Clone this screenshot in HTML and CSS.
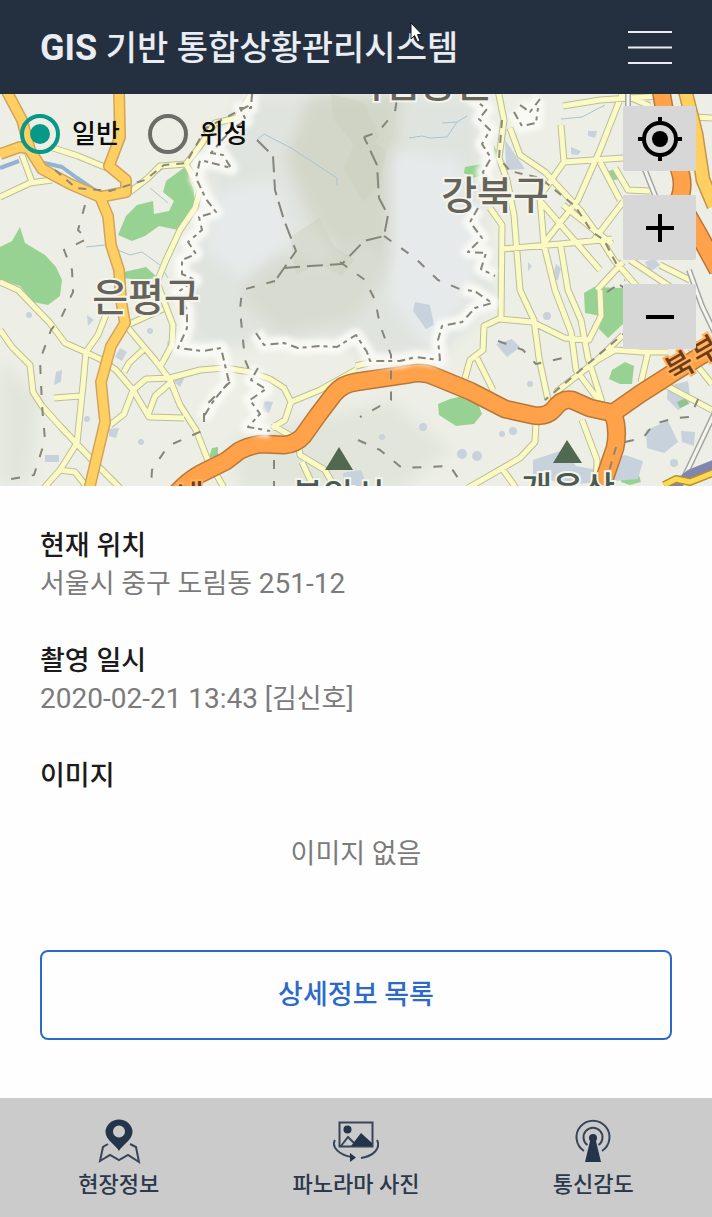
FILE: index.html
```html
<!DOCTYPE html>
<html lang="ko">
<head>
<meta charset="utf-8">
<meta name="viewport" content="width=device-width, initial-scale=1">
<title>GIS 기반 통합상황관리시스템</title>
<link rel="stylesheet" href="styles.css">
</head>
<body>
<header class="header">
  <h1 class="header-title"><span class="header-mark">GIS</span> 기반 통합상황관리시스템</h1>
  <button class="menu-button" type="button" aria-label="메뉴">
    <svg width="44" height="36" viewBox="0 0 44 36" stroke="#e9edf3" stroke-width="2"><path d="M0 2H44M0 17.500H44M0 33H44"/></svg>
  </button>
</header>

<section class="map" aria-label="지도">
  <svg class="map-canvas" viewBox="0 94 712 392" preserveAspectRatio="xMidYMid slice">
    <defs>
      <filter id="soft" x="-20%" y="-20%" width="140%" height="140%"><feGaussianBlur stdDeviation="7"/></filter>
      <filter id="glow" x="-20%" y="-20%" width="140%" height="140%"><feGaussianBlur stdDeviation="2"/></filter>
      <path id="minor" d="M253 90L237 118L215 123L200 146L186 164L160 166L148 178L130 192M186 164L200 190L195 208L180 230L166 260L157 282L165 304L173 325L172 345L160 367M50 147L78 156L107 168M0 197L30 183L52 180M22 155L32 182M0 282L18 290L50 323L65 343L85 352L100 359L116 370L133 390L149 417L184 418M0 330L12 347L30 365L33 392L42 406L60 426L76 443L95 463L120 488M107 312L98 335L86 352L83 385L77 443L60 470L44 488M128 328L155 360L170 380L180 405L196 430L207 458L224 488M125 326L163 309M143 350L129 363L124 372M133 390L146 379L170 378L200 370L225 368L250 372L270 379L284 388L291 402L285 420L272 428M133 390L124 414L110 425M170 383L155 396L148 415M291 402L320 390L356 370M54 398L80 396M60 470L75 472L86 486M272 425L298 440L300 455L325 470L335 488M302 462L314 488
      M356 366L372 362L430 362M498 90L504 120L499 158L507 180L514 215L520 290L534 320L539 358L548 400M510 128L520 155L545 172L580 210L596 232L614 260L640 290M563 106L600 100L660 96M622 94L600 150L578 200L545 242M561 125L564 162L623 158M564 162L540 196M540 198L544 245L555 290L571 332L576 370L600 402M502 249L560 244L612 239M490 208L502 225L501 318L484 326L483 350L470 360L465 378M541 202L600 270M563 205L612 244M623 202L594 240M500 319L532 322L565 338L589 340L601 316L600 290M560 242L568 290L581 320L588 358L602 402M623 335L595 362L556 392M594 362L615 350L642 352L668 352M648 352L641 382M477 358L493 390M536 422L535 442L520 458L468 488M501 467L516 488M582 420L597 460L596 486M623 262L597 290M600 162L620 200M615 168L628 190L650 191M622 94L650 106M630 260L690 300M652 115L712 118M665 385L712 410M686 352L712 384M660 265L690 280"/>
      <path id="major" d="M6 90L22 120L30 150L42 169L70 184L100 197L108 216L111 245L119 270L121 300L125 323L111 346L101 382L105 422L97 456L89 490M119 90L120 137L109 166L126 180L126 192L100 197M0 154L20 147L32 149"/>
      <path id="east" d="M685 90L696 134L703 180L714 206"/>
      <path id="orange" d="M174 496Q186 482 200 474L226 461L239 451Q250 445 262 444L284 445Q296 444 303 436L318 415L334 394Q342 384 356 382L410 374Q424 371 436 377L470 391L505 409L532 415Q546 418 554 409Q562 398 572 400L590 408L613 413L640 394L676 371L720 344M613 413Q619 430 615 448L600 492M661 90L667 125L681 175Q684 188 679 200L699 235L718 270"/>
      <path id="ridge" d="M252 94L251 108L240 108L246 120L234 128L222 140L211 153L223 155L231 168L200 160L196 178L206 199L216 212L199 217L202 230L188 242L196 254L182 260L182 274L195 280L178 292L187 310L187 328L178 348L203 351L221 348L225 365L229 382L214 400L203 418M256 333L264 345L284 343L298 348L320 346L337 347L356 335L367 352L370 361L400 361L416 357L440 360L438 340L442 326L462 322L475 308L492 303L476 292L463 289M470 97L487 109L479 119L490 130L482 144L491 158L483 172L487 183M478 208L470 222L482 238L468 252L486 253L481 269L495 276M258 368L251 380L266 389L250 400L260 414L248 427L270 431M520 105L530 112L540 99M514 112L522 126L536 123L538 108"/>
    </defs>
    <rect y="94" width="712" height="392" fill="#edefe6"/>
    <g filter="url(#soft)">
      <path fill="#e0e4df" d="M245 94L480 94L485 220L495 300L440 355L370 360L335 340L250 345L220 350L190 340L185 260L215 205L205 160z"/>
      <path fill="#d3d7c9" d="M310 94L400 94L395 180L400 250L370 285L315 225L285 160z"/>
      <path fill="#d8dbd0" d="M262 250L320 265L370 240L390 270L355 320L280 335L240 300z"/>
      <path fill="#e6eaea" d="M390 150L460 160L480 280L430 350L390 300zM220 190L275 180L295 240L245 280L205 250z"/>
      <path fill="#e1e5da" d="M230 440L390 400L450 450L400 490L240 490zM0 360L40 400L30 480L0 486z"/>
    </g>
    <g fill="#c9cdb8" opacity=".35"><path d="M331 94L363 102L380 136L361 156L344 132L333 119z"/><path d="M290 237L319 218L334 246L355 259L342 276L319 264L296 275z"/><path d="M359 130L386 151L380 185L363 202L344 169z"/></g>
    <g fill="#98d292">
      <path d="M166 181L185 167L194 190L194 216L178 230L159 226L145 236L132 241L118 235L126 216L137 205L153 201L154 214L169 211L174 201L163 192z"/>
      <path d="M20 227L25 243L45 255L56 267L62 280L60 296L48 305L33 302L20 286L0 280V247L12 241z"/>
      <path d="M124 272L146 267L158 278L140 280L123 278z"/><path d="M465 167L482 164L485 174L473 178L464 173z"/>
      <path d="M438 404L450 399L463 396L477 401L482 414L474 424L456 426L439 415z"/>
      <path d="M584 293L594 287L623 288V324L608 338L599 329L601 316L585 313z"/>
      <path d="M612 370L625 362L634 366L632 384L620 384L609 379z"/><path d="M622 474L638 472L641 482L630 485L621 482z"/><path d="M609 171L618 168L620 179L608 181zM212 448L218 447L218 456L209 458zM494 145L499 156L493 160z"/>
    </g>
    <g fill="#c7d2dc">
      <path d="M415 302L430 305L434 325L426 329L413 311z"/><path d="M533 460L563 450L576 466L592 469L625 455L643 461L638 479L565 485L533 474z"/><path d="M646 430L668 421L678 442L664 453L647 448zM668 386L688 381L691 402L678 410L667 399zM681 431L695 432L694 446L682 442z"/><path d="M496 344L512 339L520 347L507 357zM87 315L94 320L88 326zM178 376L185 377L180 387L174 382zM265 401L273 402L269 413L261 411zM45 455H59V462H45zM120 348L127 352L122 361L115 357zM56 372L62 370L61 382L54 385zM109 429L119 428L116 438L109 436zM343 473L361 470L367 486H343zM505 140L525 169L506 170zM571 147L581 151L578 155L571 154zM588 131L597 131L595 138L588 136zM528 262L532 266L528 271zM645 262L654 258L660 265L650 272zM556 264L561 268L558 280L552 279z"/>
      <circle cx="29" cy="315" r="3"/><circle cx="150" cy="331" r="3"/><circle cx="87" cy="419" r="3"/><circle cx="141" cy="442" r="3"/><circle cx="171" cy="344" r="4"/><circle cx="423" cy="427" r="4"/><circle cx="462" cy="454" r="5"/><circle cx="477" cy="456" r="5"/><circle cx="513" cy="431" r="4"/><circle cx="530" cy="384" r="3"/><circle cx="547" cy="316" r="4"/><circle cx="382" cy="437" r="3"/><circle cx="674" cy="463" r="4"/><circle cx="502" cy="434" r="3"/>
    </g>
    <path fill="#69b95f" opacity=".6" d="M677 402L686 398L689 404L680 408z"/>
    <g fill="none" stroke-linejoin="round">
      <path stroke="#91b4d2" stroke-width="4" d="M0 168L19 161M40 162L62 167L77 178L96 191M130 190L148 178L164 166"/>
      <path stroke="#a8c4d2" stroke-width="1" d="M257 140L264 134L291 148L314 163L337 178V186M409 138L422 136L430 138L447 137L457 122L442 123M457 122L467 116M561 119L582 117L605 105M86 247L105 245L130 255L142 252L160 265L168 278M150 188L168 203"/>
      <use href="#minor" stroke="#bfbc98" stroke-width="7"/><use href="#minor" stroke="#fafac5" stroke-width="5"/>
      <path stroke="#a5a5a1" stroke-width="6" d="M628 94V107M643 165L662 213M689 270L702 306L722 348M716 410L680 486"/><path stroke="#f5f5ef" stroke-width="3" d="M628 94V107M643 165L662 213M689 270L702 306L722 348M716 410L680 486"/>
      <use href="#major" stroke="#d1a45c" stroke-width="12"/><use href="#major" stroke="#ffcf62" stroke-width="9"/>
      <use href="#east" stroke="#c59643" stroke-width="15"/><use href="#east" stroke="#ffcf62" stroke-width="12"/>
      <use href="#orange" stroke="#b87738" stroke-width="19"/><use href="#orange" stroke="#ffa249" stroke-width="16"/>
      <path stroke="#7f86b0" stroke-width="9" d="M670 490L690 474L720 462"/><path stroke="#b58d35" stroke-width="8" d="M664 485L676 479L690 482L720 470"/><path stroke="#ffda51" stroke-width="5" d="M664 485L676 479L690 482L720 470"/>
      <use href="#ridge" stroke="#fbfbf7" stroke-width="14" opacity=".9" filter="url(#glow)"/>
      <use href="#ridge" stroke="#858579" stroke-width="2" stroke-dasharray="8 4 4 5"/>
      <g stroke="#85857a" stroke-width="2" stroke-dasharray="9 12">
        <path stroke-dasharray="16 7" d="M257 140L273 156L275 190L284 220L296 251L275 281M284 268L310 266L342 264L364 241L384 236L388 215L379 198L377 165L364 137"/>
        <path d="M275 281L242 290L240 310L245 360L250 372M364 137L378 132L395 112L397 98"/>
        <path d="M384 236L415 258L438 280L462 290M340 262L365 280L375 300L380 325L391 355L391 400L360 417M85 205L78 230L87 239L64 250L72 270L73 292L62 316L51 330L40 360L42 405L45 440L34 475L0 481"/>
        <path d="M230 382L204 407L204 430L168 446L152 470L151 486M274 460V486M358 440L380 450L402 468L450 466L462 484M498 341L523 350L536 364L563 358M625 442L643 438L654 424L675 418L690 417L700 395M607 292L625 280M620 285L640 300"/>
      </g>
      <path stroke="#8b8873" stroke-width="2" stroke-dasharray="8 7" d="M55 170L76 188L110 191L145 180L164 165L186 163L206 128L250 105M502 120L499 158L510 171L540 178L575 206L592 232L604 240L618 267M640 320L545 400M616 447L608 475"/>
    </g>
    <path fill="#516851" d="M339 447L353 470H325zM567 440L582 463H553z"/>
    <g class="map-label">
      <text x="146" y="311">은평구</text><text x="495" y="209">강북구</text><text x="420" y="97">국립공원</text>
    </g>
    <g class="map-label map-label-peak"><text x="339" y="508">북악산</text><text x="568" y="501">개운산</text></g>
    <g class="map-label map-label-road"><text x="190" y="506">내</text><text transform="translate(685 375) rotate(-30)">북</text><text transform="translate(711 359) rotate(-30)">부</text></g>
  </svg>

  <fieldset class="map-types">
    <label class="map-type"><input class="radio" type="radio" name="map-type" checked>일반</label>
    <label class="map-type"><input class="radio" type="radio" name="map-type">위성</label>
  </fieldset>
  <div class="map-tools">
    <button class="map-tool" type="button" aria-label="내 위치">
      <svg width="44" height="44" viewBox="0 0 44 44" fill="none" stroke="#000" stroke-width="4"><circle cx="22" cy="22" r="16"/><circle cx="22" cy="22" r="8" fill="#000" stroke="none"/><path d="M22 0V7M22 37V44M0 22H7M37 22H44"/></svg>
    </button>
    <button class="map-tool" type="button" aria-label="확대">
      <svg width="28" height="28" viewBox="0 0 28 28" stroke="#000" stroke-width="4"><path d="M0 14H28M14 0V28"/></svg>
    </button>
    <button class="map-tool" type="button" aria-label="축소">
      <svg width="28" height="28" viewBox="0 0 28 28" stroke="#000" stroke-width="4"><path d="M0 14H28"/></svg>
    </button>
  </div>
</section>

<main class="details">
  <section><h2 class="detail-title">현재 위치</h2><p class="detail-value">서울시 중구 도림동 <span class="detail-number">251-12</span></p></section>
  <section><h2 class="detail-title">촬영 일시</h2><p class="detail-value"><span class="detail-number">2020-02-21 13:43</span> [김신호]</p></section>
  <section><h2 class="detail-title">이미지</h2><p class="detail-value detail-empty">이미지 없음</p></section>
  <button class="list-button" type="button">상세정보 목록</button>
</main>

<nav class="tabs">
  <a class="tab" href="#site">
    <svg width="46" height="46" viewBox="0 0 46 46"><path fill="#24344a" fill-rule="evenodd" d="M23 32C20 26 9.500 21 9.500 13A13.500 12.500 0 0 1 36.500 13C36.500 21 26 26 23 32zM23 6.500a6 6 0 1 0 0 12a6 6 0 1 0 0-12z"/><path fill="none" stroke="#38445a" stroke-width="2" d="M12 25L7 28L4 42L14 36L23 41L32 36L43 43L40 28L34 25"/></svg>
    현장정보
  </a>
  <a class="tab" href="#panorama">
    <svg width="46" height="46" viewBox="0 0 46 46"><g fill="none" stroke="#38445a" stroke-width="2"><path d="M6.500 3.500H39.500V27.500H6.500zM8 27L15 18L21 24M2 21C-2 28 6 36 19 38M44 21C48 29 41 37 28 39"/></g><circle cx="14.500" cy="10.500" r="4" fill="#24344a"/><path fill="#24344a" d="M18 27L28 14L39 24V27zM17 34L23 38.500L17 43z"/></svg>
    파노라마 사진
  </a>
  <a class="tab" href="#signal">
    <svg width="46" height="46" viewBox="0 0 46 46"><g fill="none" stroke="#38445a" stroke-width="2"><path d="M14 32A16.500 16.500 0 1 1 32 32M17.500 26A9.500 9.500 0 1 1 28.500 26"/></g><circle cx="23" cy="19" r="4" fill="#24344a"/><path fill="#24344a" d="M20.500 20H25.500L31 43H15z"/></svg>
    통신감도
  </a>
</nav>

<svg class="cursor" width="14" height="21" viewBox="0 0 14 21" aria-hidden="true"><path fill="#fff" stroke="#101820" d="M1 1V17L4.500 13.500L7.500 20L10 19L7.500 12.500H12z"/></svg>
</body>
</html>
```

FILE: styles.css
```css
* { box-sizing: border-box; }

body {
  position: relative;
  display: flex;
  flex-direction: column;
  min-height: 100vh;
  margin: 0;
  background: #fefefe;
  color: #1b1b1b;
  font-family: Roboto, "Noto Sans CJK KR", sans-serif;
  font-size: 27px;
  line-height: 38px;
}

button { padding: 0; border: 0; font: inherit; cursor: pointer; }
svg { display: block; flex: none; }

.header {
  display: flex;
  align-items: center;
  justify-content: space-between;
  padding: 23px 40px 21px;
  background: #24303f;
}
.header-title {
  margin: 0;
  color: #e9edf3;
  font-size: 34px;
  font-weight: 500;
  line-height: 50px;
}
.header-mark { font-size: 36px; font-weight: 700; }
.menu-button { background: none; }

.map { position: relative; overflow: hidden; }
.map-canvas { width: 100%; height: auto; }
.map-label {
  fill: #66635b;
  stroke: #f4f4ec;
  stroke-width: 4px;
  paint-order: stroke;
  font-size: 39px;
  font-weight: 500;
  text-anchor: middle;
}
.map-label-peak { fill: #4b5a50; font-size: 34px; }
.map-label-road { fill: #703c18; stroke: #ffb25f; font-size: 30px; }

.map-types {
  position: absolute;
  top: 20px;
  left: 20px;
  display: flex;
  gap: 28px;
  margin: 0;
  padding: 0;
  border: 0;
}
.map-type {
  display: flex;
  align-items: center;
  gap: 12px;
  color: #0c0c0c;
  font-size: 26px;
  font-weight: 500;
}
.radio {
  display: grid;
  place-items: center;
  width: 40px;
  height: 40px;
  margin: 0;
  border: 4px solid #6e6c69;
  border-radius: 50%;
  appearance: none;
}
.radio:checked { border-color: #079887; }
.radio:checked::before {
  width: 20px;
  height: 20px;
  border-radius: 50%;
  background: #079887;
  content: "";
}

.map-tools {
  position: absolute;
  top: 12px;
  right: 16px;
  display: grid;
  gap: 24px;
}
.map-tool {
  display: grid;
  place-items: center;
  width: 73px;
  height: 65px;
  border-radius: 2px;
  background: #d7d7d7;
}

.details {
  display: flex;
  flex: 1;
  flex-direction: column;
  gap: 39px;
  padding: 41px 40px 58px;
}
.detail-title,
.detail-value { margin: 0; font-size: 27px; }
.detail-title { font-weight: 500; }
.detail-value { color: #7b7b7b; }
.detail-number { font-size: 28px; }
.detail-empty { padding: 40px 0 38px; text-align: center; }
.list-button {
  padding: 24px 16px;
  border: 2px solid #2d6ac8;
  border-radius: 8px;
  background: #fefefe;
  color: #2d6ac8;
  font-weight: 500;
}

.tabs {
  display: grid;
  grid-template-columns: repeat(3, 1fr);
  padding: 21px 0 15px;
  background: #cbcbcb;
}
.tab {
  display: flex;
  flex-direction: column;
  align-items: center;
  gap: 3px;
  color: #2c384b;
  font-size: 22px;
  font-weight: 500;
  line-height: 34px;
  text-decoration: none;
}

.cursor { position: absolute; top: 22px; left: 410px; pointer-events: none; }
```
